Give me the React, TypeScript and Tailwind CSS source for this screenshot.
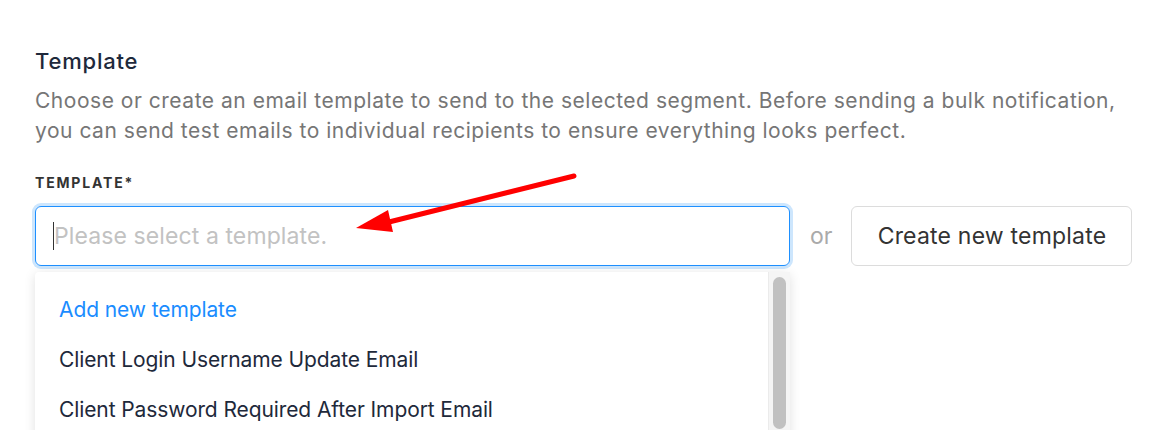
import React from 'react';

const items = [
  'Client Login Username Update Email',
  'Client Password Required After Import Email',
];

const App: React.FC = () => {
  return (
    <div className="relative h-[430px] w-[1154px] overflow-hidden bg-white font-['Inter',sans-serif]">
      <div className="px-[35px] pt-[46px]">
        {/* Section header */}
        <h2 className="text-[22px] leading-[30px] font-medium tracking-[0.8px] text-[#1e293b]">Template</h2>
        <p className="mt-[10px] w-[1100px] text-[21px] leading-[30px] tracking-[0.52px] text-[#767676]">
          Choose or create an email template to send to the selected segment. Before sending a bulk notification,
          you can send test emails to individual recipients to ensure everything looks perfect.
        </p>

        <div className="mt-[27px] text-[14px] leading-[20px] font-bold tracking-[0.13em] text-[#333]">TEMPLATE*</div>

        {/* Select + button row */}
        <div className="mt-[13px] flex items-center">
          <div className="relative w-[755px] shrink-0">
            <div className="flex h-[60px] items-center rounded-[6px] border border-[#1e90ff] px-[17px] ring-[3px] ring-[#cde6fd]">
              <span className="h-[28px] w-[1px] bg-[#333]" />
              <span className="text-[23px] tracking-[0.1px] text-[#c2c2c2]">Please select a template.</span>
            </div>

            {/* Dropdown */}
            <div className="absolute left-0 top-[66px] flex h-[200px] w-[755px] rounded-[4px] bg-white shadow-[0_2px_12px_rgba(0,0,0,0.12)]">
              <div className="flex-1 pt-[13px]">
                <div className="flex h-[50px] items-center px-[24px] text-[21px] tracking-[-0.1px] text-[#1a8cff]">Add new template</div>
                {items.map((t) => (
                  <div key={t} className="flex h-[50px] items-center px-[24px] text-[21px] tracking-[-0.1px] text-[#1e293b]">
                    {t}
                  </div>
                ))}
              </div>
              <div className="w-[22px] border-l border-[#ebebeb] bg-[#f5f5f5] pl-[4px] pr-[4px] pt-[5px]">
                <div className="h-[152px] rounded-full bg-[#c1c1c1]" />
              </div>
            </div>
          </div>

          <span className="ml-[20px] mr-[19px] shrink-0 text-[23px] text-[#aaa]">or</span>

          <button className="h-[60px] w-[281px] shrink-0 rounded-[6px] border border-[#dcdcdc] bg-white text-[23px] tracking-[0.2px] text-[#333]">
            Create new template
          </button>
        </div>
      </div>

      {/* Red annotation arrow */}
      <svg className="absolute left-0 top-0" width="1154" height="430">
        <line x1="574" y1="176" x2="385" y2="223" stroke="#f00" strokeWidth="5" strokeLinecap="round" />
        <polygon points="356,228 388,210 393,232" fill="#f00" />
      </svg>
    </div>
  );
};

export default App;
